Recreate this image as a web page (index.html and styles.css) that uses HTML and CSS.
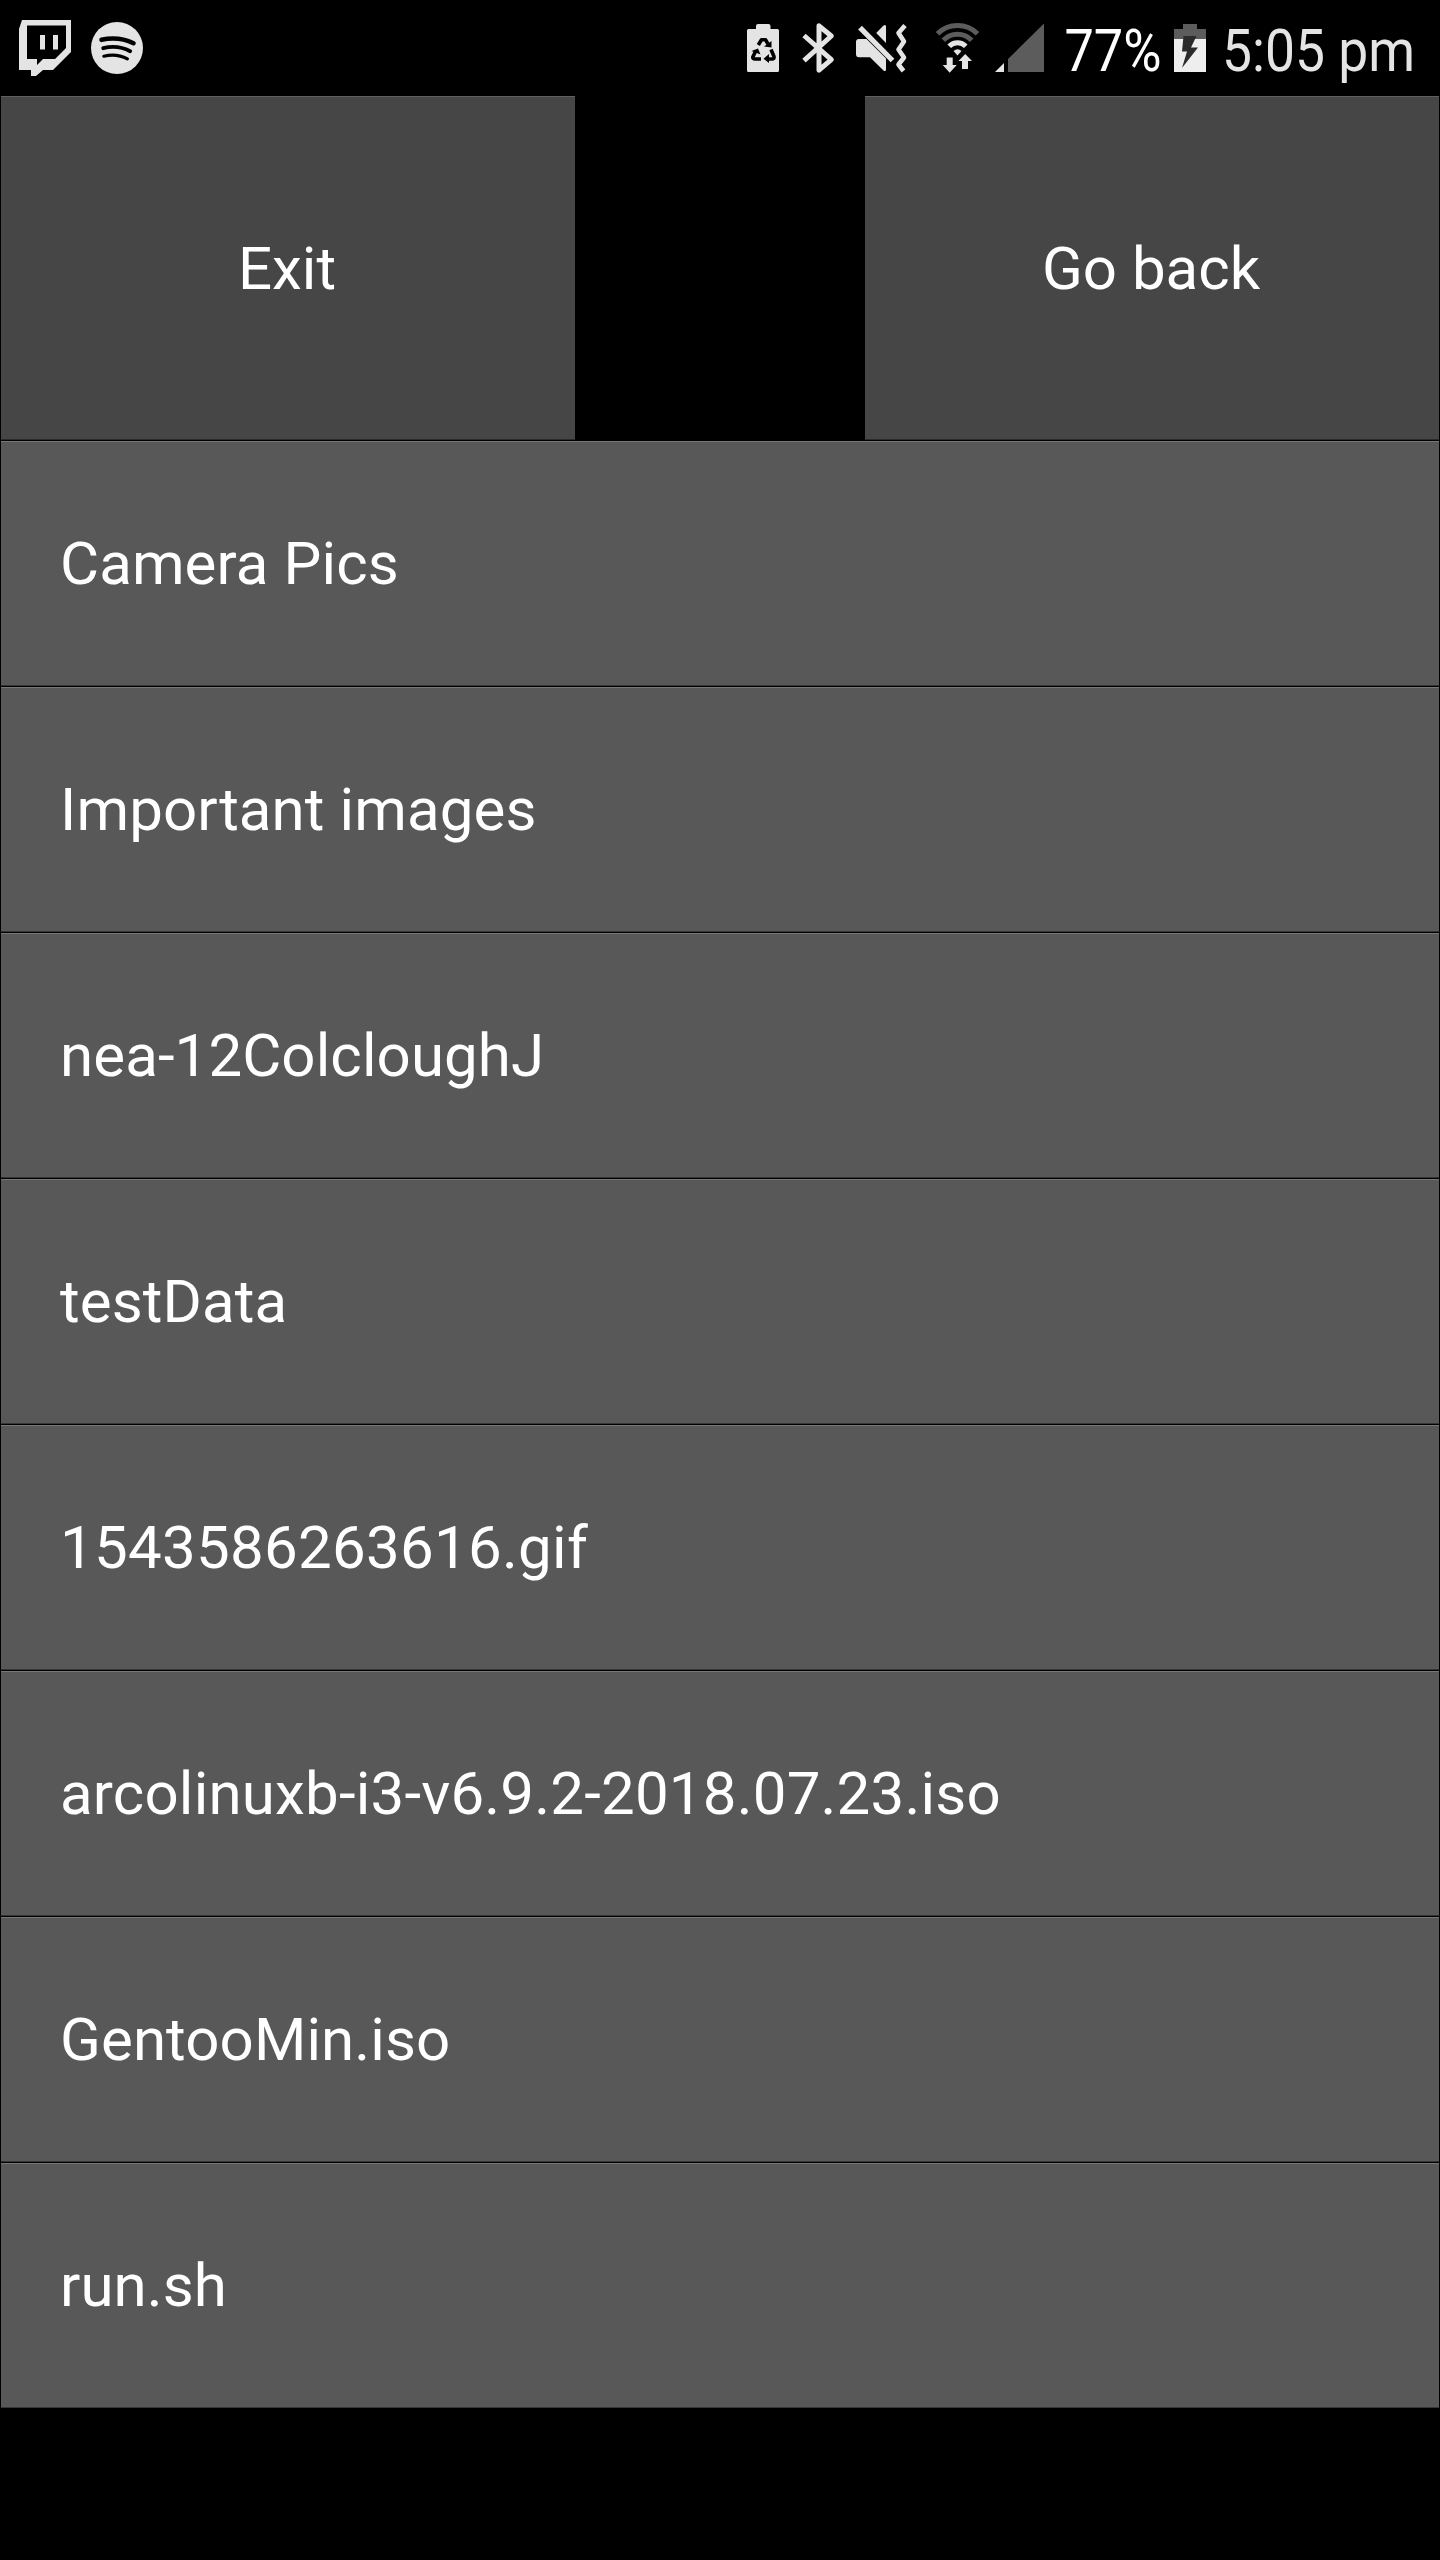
FILE: index.html
```html
<!DOCTYPE html>
<html lang="en">
<head>
<meta charset="utf-8">
<title>Files</title>
<link rel="stylesheet" href="styles.css">
</head>
<body>
<header class="status">
  <div class="status-group">
    <svg width="72" height="96" viewBox="9 0 72 96" fill="#e4e4e4"><path fill-rule="evenodd" d="M22 20H71V52L53 70H43L36 76H31V70H19V29ZM27 25.500V59H37V65L43 59H55L66 48V25.500Z"/><path d="M40 35h5v14.500h-5zM53 35h5v14.500h-5z"/></svg>
    <svg width="72" height="96" viewBox="81 0 72 96"><circle cx="117" cy="48" r="26" fill="#e4e4e4"/><g fill="none" stroke="#000" stroke-linecap="round"><path stroke-width="4.600" d="M101.500 39.800Q118.500 36 133.500 43.200"/><path stroke-width="3.800" d="M103.200 48.200Q117.500 44.500 130.200 51.200"/><path stroke-width="3.200" d="M103.800 56.200Q116.500 53 127.400 58.800"/></g></svg>
  </div>
  <div class="status-group">
    <svg width="52" height="96" viewBox="738 0 52 96"><path fill="#e4e4e4" d="M748.500 29H756V26Q756 24 758 24H768.500Q770.500 24 770.500 26V29H777.500Q779 29 779 30.500V70.500Q779 72 777.500 72H748.500Q747 72 747 70.500V30.500Q747 29 748.500 29Z"/><g fill="none" stroke="#000" stroke-width="3.600" stroke-linejoin="round"><path d="M758.300 45L761.500 39.700H765.500L768 44"/><path d="M756 50.500L752.800 57Q752.500 59 755 59H761"/><path d="M771 49.500L774 56.500Q774.500 59 772 59H767.500"/></g><path d="M764 46.500L771.500 47.500V41ZM751.500 51L758 48.500L760.500 54.500ZM769 54V63L763.500 58.700Z"/></svg>
    <svg width="54" height="96" viewBox="790 0 54 96" fill="none" stroke="#e4e4e4" stroke-width="5" stroke-linejoin="round"><path d="M804 35.500L831.300 59.700L819 70.200V25.800L831.300 36L804 60.700"/></svg>
    <svg width="78" height="96" viewBox="844 0 78 96" fill="#e4e4e4"><path d="M859 39H866.500L886 58.500V69.500Q886 71.500 884 71L870 57.300H859Q856 57.300 856 54V42Q856 39 859 39ZM876.200 33L883.500 25.500Q886 24 886 26.500V43Z"/><path fill="none" stroke="#e4e4e4" stroke-width="5.200" d="M860 27.700L892.500 60.500"/><path fill="none" stroke="#e4e4e4" stroke-width="4.600" stroke-linejoin="round" d="M905 25.500L898.500 33L904 41.500L898.500 49.500L904 57.500L898.500 64.500L903.500 71"/></svg>
    <svg width="64" height="96" viewBox="922 0 64 96"><g fill="none" stroke-width="5"><path stroke="#5c5c5c" d="M937.500 33.700A28.500 28.500 0 0 1 977.500 33.700M943.300 40.200A20 20 0 0 1 971.700 40.200"/><path stroke="#e4e4e4" d="M949.200 46.200A11.500 11.500 0 0 1 965.800 46.200"/></g><path fill="#e4e4e4" d="M953.500 51Q957.500 47.500 961.500 51L957.500 55.500ZM946.700 57.500H952.700V65H956.700L949.700 72.700L942.700 65H946.700ZM962 69V61H958.500L965.200 54L972 61H968V69Z"/></svg>
    <svg width="68" height="96" viewBox="986 0 68 96"><path fill="#e4e4e4" d="M995 72H1004V63Z"/><path fill="#5c5c5c" d="M1008 72H1044V23.500L1008 59Z"/></svg>
    <svg class="label" width="113" height="96" viewBox="1054 0 113 96"><text x="1064.500" y="71" textLength="97" lengthAdjust="spacingAndGlyphs" fill="#fff">77%</text></svg>
    <svg width="50" height="96" viewBox="1167 0 50 96"><path fill="#5c5c5c" d="M1174 29H1183V24H1197V29H1206V39H1174Z"/><path fill="#eee" d="M1174 39H1206V72H1174Z"/><path fill="#2b2b2b" d="M1183.500 36H1196.500L1191 47.500H1198L1182 68L1187 51.500H1182Z"/></svg>
    <svg class="label" width="223" height="96" viewBox="1217 0 223 96"><text x="1222" y="71" textLength="193" lengthAdjust="spacingAndGlyphs" fill="#e4e4e4">5:05 pm</text></svg>
  </div>
</header>
<nav class="toolbar">
  <button class="key">Exit</button>
  <button class="key">Go back</button>
</nav>
<main class="files">
  <button class="file">Camera Pics</button>
  <button class="file">Important images</button>
  <button class="file">nea-12ColcloughJ</button>
  <button class="file">testData</button>
  <button class="file file-numeric">1543586263616.gif</button>
  <button class="file file-mixed">arcolinuxb-i3-v6.9.2-2018.07.23.iso</button>
  <button class="file">GentooMin.iso</button>
  <button class="file">run.sh</button>
</main>
</body>
</html>
```
FILE: styles.css
```css
* { box-sizing: border-box; }
body {
  margin: 0;
  width: 1440px;
  height: 2560px;
  overflow: hidden;
  background: #000;
  color: #fff;
  font-family: Roboto, "Liberation Sans", sans-serif;
}
.status {
  display: flex;
  justify-content: space-between;
  height: 96px;
}
.status-group { display: flex; }
.status-group:first-child { padding-left: 9px; }
.status svg { display: block; flex: none; overflow: visible; }
.label text { font-size: 60px; }
button {
  display: block;
  margin: 0;
  border: 0;
  padding: 0;
  color: #fff;
  font: 400 60px/70px Roboto, "Liberation Sans", sans-serif;
  white-space: nowrap;
}
.toolbar {
  display: flex;
  justify-content: space-between;
  height: 345px;
  padding: 0 1px 1px;
}
.key {
  width: 574px;
  height: 344px;
  padding: 1px 2px 0 0;
  background: #464646;
  box-shadow: inset 0 1px #606060, inset 0 -1px #2b2b2b;
}
.files {
  display: flex;
  flex-direction: column;
  gap: 1px;
  padding: 0 1px;
}
.file {
  height: 245px;
  padding-left: 59px;
  letter-spacing: 0.1px;
  text-align: left;
  background: #585858;
  box-shadow: inset 0 1px #787878, inset 0 -1px #363636;
}
.file-numeric { letter-spacing: 0.28px; }
.file-mixed { letter-spacing: 0.2px; }
```
